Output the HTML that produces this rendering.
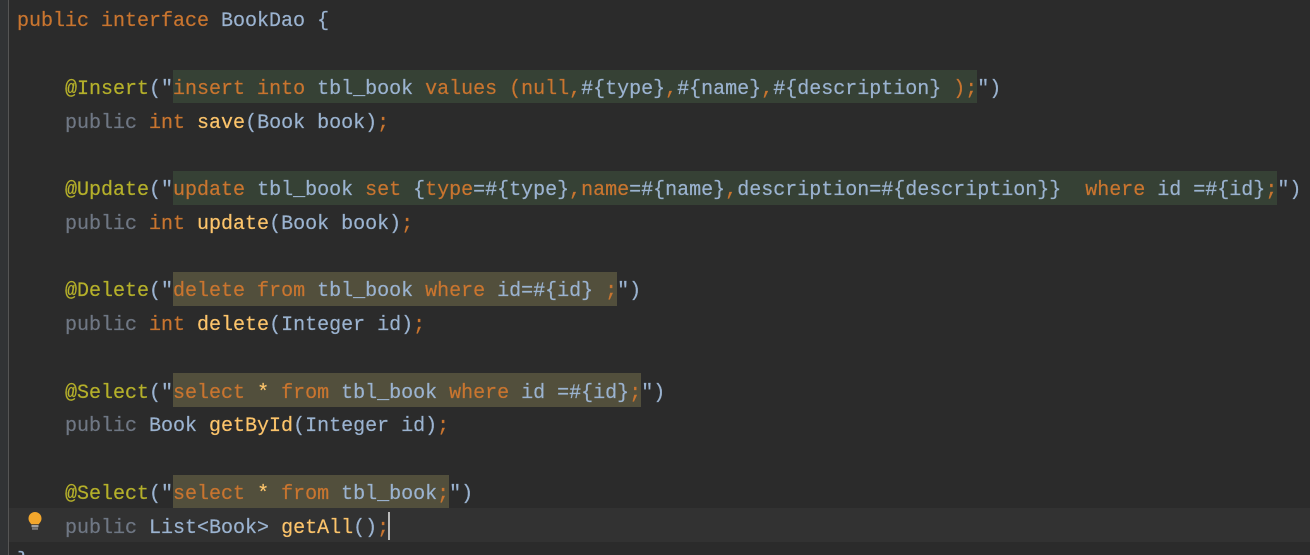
<!DOCTYPE html>
<html><head><meta charset="utf-8"><style>
html,body{margin:0;padding:0;width:1310px;height:555px;overflow:hidden;background:#2b2b2b}
#r{position:absolute;left:0;top:0;width:1310px;height:555px;overflow:hidden;background:#2b2b2b}
#g{position:absolute;left:0;top:0;width:8px;height:555px;background:#313335;border-right:1px solid #555}
.b{position:absolute}
.l{position:absolute;left:17px;height:34px;white-space:pre;font:20px/34px "Liberation Mono",monospace;color:#9bb3d0;-webkit-text-stroke:0.2px currentColor}
.k{color:#c9752f}.a{color:#b5b02a}.m{color:#fcc46b}.p{color:#6f7784}
</style></head><body>
<div id="r">
<div class="b" style="left:9px;top:508px;width:1301px;height:34px;background:#323232"></div>
<div id="g"></div>
<div class="b" style="left:173px;top:70px;width:804px;height:33px;background:#364135"></div>
<div class="b" style="left:173px;top:171px;width:1104px;height:34px;background:#364135"></div>
<div class="b" style="left:173px;top:272px;width:444px;height:34px;background:#524f3c"></div>
<div class="b" style="left:173px;top:373px;width:468px;height:34px;background:#524f3c"></div>
<div class="b" style="left:173px;top:475px;width:276px;height:33px;background:#524f3c"></div>
<div class="l" style="top:5px"><span class="k">public interface </span>BookDao {</div>
<div class="l" style="top:73px">    <span class="a">@Insert</span>("<span class="k">insert into </span>tbl_book <span class="k">values (null,</span>#{type}<span class="k">,</span>#{name}<span class="k">,</span>#{description} <span class="k">);</span>")</div>
<div class="l" style="top:107px">    <span class="p">public </span><span class="k">int </span><span class="m">save</span>(Book book)<span class="k">;</span></div>
<div class="l" style="top:174px">    <span class="a">@Update</span>("<span class="k">update </span>tbl_book <span class="k">set </span>{<span class="k">type</span>=#{type}<span class="k">,name</span>=#{name}<span class="k">,</span>description=#{description}}  <span class="k">where </span>id =#{id}<span class="k">;</span>")</div>
<div class="l" style="top:208px">    <span class="p">public </span><span class="k">int </span><span class="m">update</span>(Book book)<span class="k">;</span></div>
<div class="l" style="top:275px">    <span class="a">@Delete</span>("<span class="k">delete from </span>tbl_book <span class="k">where </span>id=#{id} <span class="k">;</span>")</div>
<div class="l" style="top:309px">    <span class="p">public </span><span class="k">int </span><span class="m">delete</span>(Integer id)<span class="k">;</span></div>
<div class="l" style="top:377px">    <span class="a">@Select</span>("<span class="k">select </span><span class="m">*</span> <span class="k">from </span>tbl_book <span class="k">where </span>id =#{id}<span class="k">;</span>")</div>
<div class="l" style="top:410px">    <span class="p">public </span>Book <span class="m">getById</span>(Integer id)<span class="k">;</span></div>
<div class="l" style="top:478px">    <span class="a">@Select</span>("<span class="k">select </span><span class="m">*</span> <span class="k">from </span>tbl_book<span class="k">;</span>")</div>
<div class="l" style="top:512px">    <span class="p">public </span>List&lt;Book&gt; <span class="m">getAll</span>()<span class="k">;</span></div>
<div class="l" style="top:545px">}</div>
<div class="b" style="left:388px;top:512px;width:2px;height:28px;background:#bbb"></div>
<svg class="b" style="left:26px;top:511px" width="18" height="20" viewBox="0 0 18 20">
<path d="M9 1a6.5 6.5 0 0 0-6.5 6.5c0 2.6 1.4 3.9 2.7 5.7h7.6c1.3-1.8 2.7-3.1 2.7-5.7A6.5 6.5 0 0 0 9 1z" fill="#f2a62c"/>
<rect x="5.5" y="14" width="7" height="2.2" fill="#a0a0a0"/><rect x="6" y="16.6" width="6" height="2.2" fill="#7a7a7a"/>
</svg>
</div>
</body></html>
